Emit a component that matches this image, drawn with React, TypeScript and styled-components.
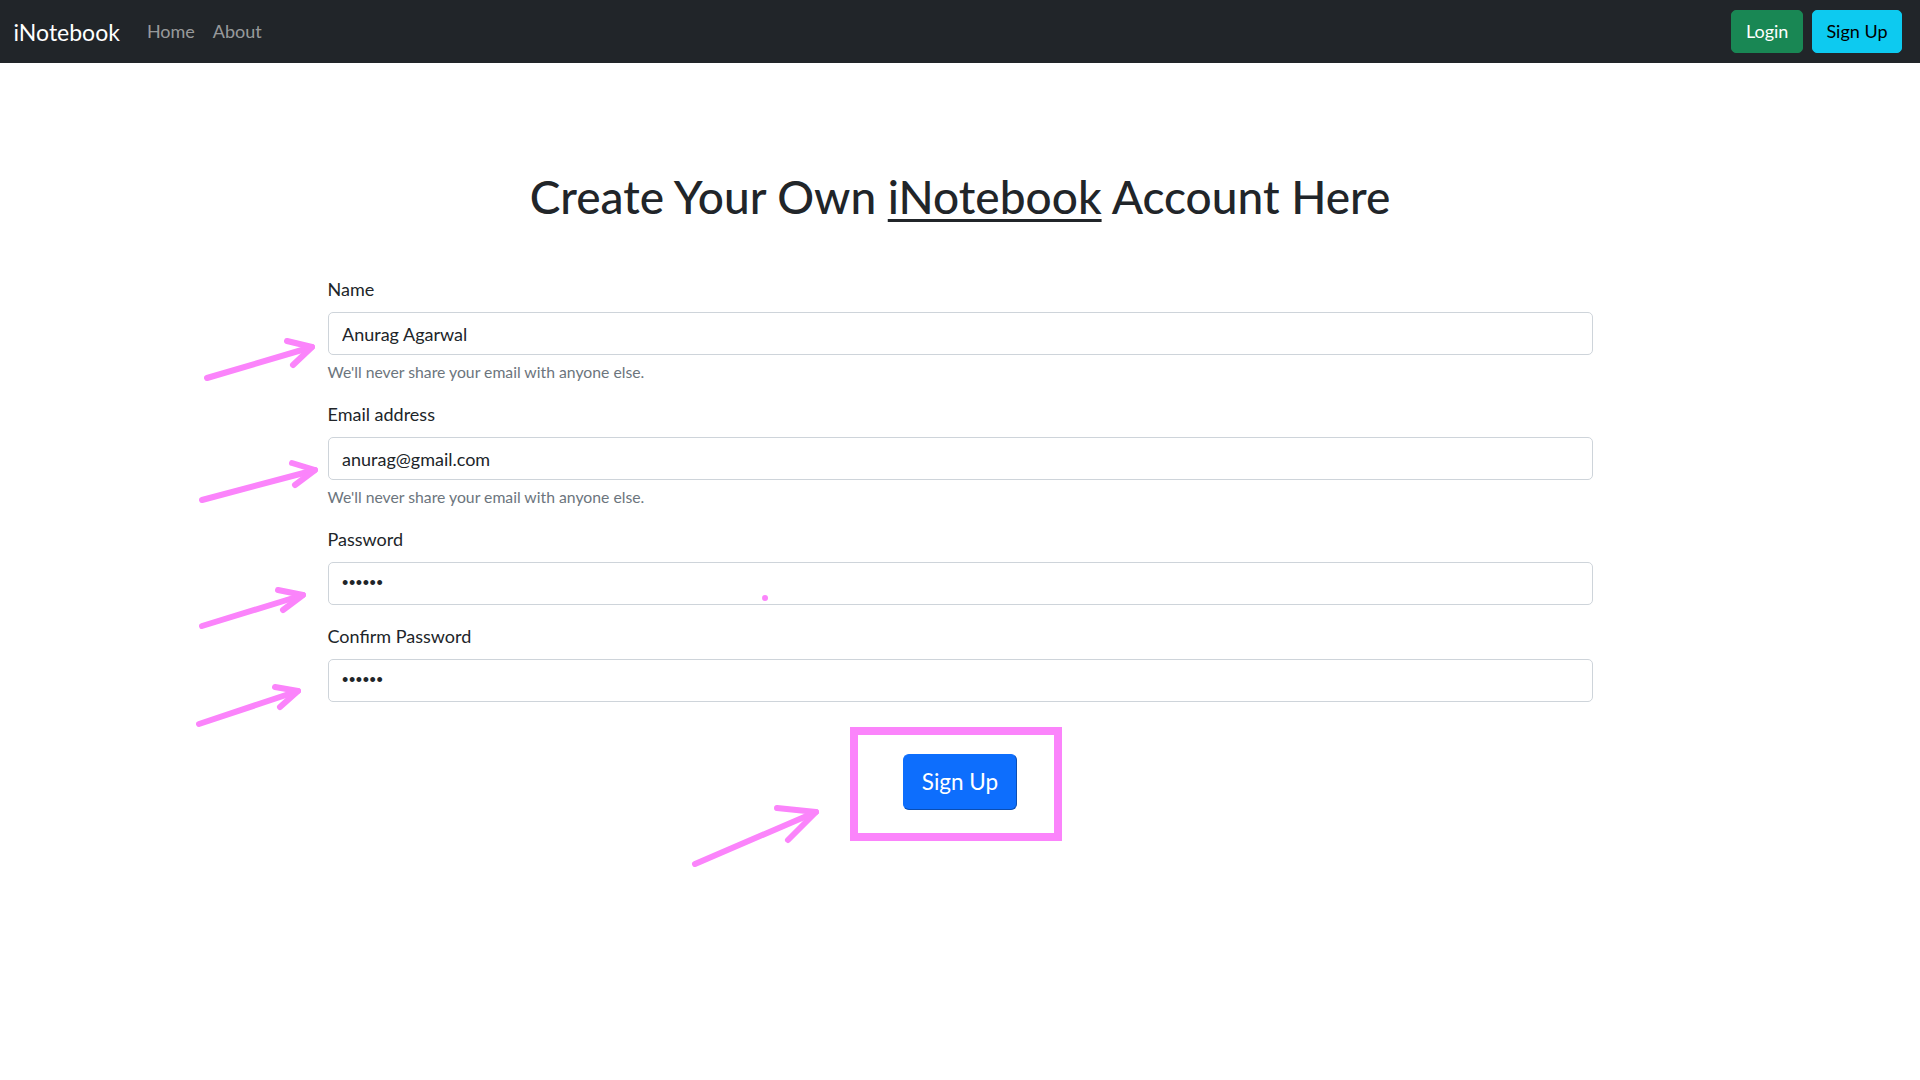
import React from "react";
import styled, { createGlobalStyle } from "styled-components";

const GlobalStyle = createGlobalStyle`
  html, body {
    margin: 0;
    padding: 0;
    background: #ffffff;
  }
  body {
    font-family: Lato, "Liberation Sans", Arial, sans-serif;
    color: #212529;
  }
  * { box-sizing: border-box; }
`;

const Page = styled.div`
  position: relative;
  min-height: 1080px;
  background: #ffffff;
`;

const Navbar = styled.nav`
  height: 63px;
  background: #212529;
  display: flex;
  align-items: center;
  justify-content: space-between;
  padding: 0 13.5px;
`;

const NavLeft = styled.div`
  display: flex;
  align-items: center;
`;

const Brand = styled.a`
  font-size: 23px;
  line-height: 34px;
  color: #ffffff;
  text-decoration: none;
  margin-right: 18px;
`;

const NavLink = styled.a`
  font-size: 18px;
  line-height: 27px;
  padding: 0 9px;
  color: rgba(255, 255, 255, 0.55);
  text-decoration: none;
`;

const NavRight = styled.div`
  display: flex;
  align-items: center;
`;

const NavButton = styled.button<{ $variant: "green" | "cyan" }>`
  font-family: inherit;
  font-size: 18px;
  line-height: 27px;
  padding: 7px 13.5px;
  margin: 0 4.5px;
  border-radius: 5px;
  border: 1px solid ${(p) => (p.$variant === "green" ? "#198754" : "#0dcaf0")};
  background: ${(p) => (p.$variant === "green" ? "#198754" : "#0dcaf0")};
  color: ${(p) => (p.$variant === "green" ? "#ffffff" : "#000000")};
`;

const Main = styled.main`
  padding-top: 107px;
`;

const Heading = styled.h1`
  margin: 0;
  font-size: 46px;
  line-height: 54px;
  font-weight: 500;
  text-align: center;
  color: #212529;
`;

const Underlined = styled.span`
  text-decoration: underline;
  text-decoration-thickness: 3px;
  text-underline-offset: 5px;
`;

const Form = styled.form`
  width: 1265px;
  margin: 52px auto 0;
`;

const Field = styled.div`
  margin-bottom: 18px;
`;

const Label = styled.label`
  display: block;
  font-size: 18px;
  line-height: 27px;
  margin-bottom: 9px;
`;

const Input = styled.input`
  display: block;
  width: 100%;
  height: 43px;
  padding: 6.75px 13.5px;
  font-family: inherit;
  font-size: 18px;
  line-height: 27px;
  color: #212529;
  background: #ffffff;
  border: 1px solid #ced4da;
  border-radius: 5px;
  outline: none;

  &[type="password"] {
    font-family: "Liberation Sans", Arial, sans-serif;
    letter-spacing: 0.6px;
  }
`;

const Help = styled.div`
  margin-top: 4.5px;
  font-size: 15.75px;
  line-height: 23.6px;
  color: #6c757d;
`;

const SubmitRow = styled.div`
  display: flex;
  justify-content: center;
  padding-top: 34px;
`;

const SubmitButton = styled.button`
  font-family: inherit;
  font-size: 22.5px;
  line-height: 34px;
  padding: 10px 18px;
  border-radius: 6px;
  border: 1px solid #0d6efd;
  border-right-color: #0a4eb4;
  border-bottom-color: #0a4eb4;
  background: #0d6efd;
  color: #ffffff;
`;

const Annotations = styled.svg`
  position: absolute;
  top: 0;
  left: 0;
  pointer-events: none;
`;

const arrows = [
  { shaft: "M207 378 L312 347", head: "M287 341 L312 347 L293 365" },
  { shaft: "M202 500 L315 470", head: "M292 463 L315 470 L295 485" },
  { shaft: "M202 626 L303 595", head: "M278 590 L303 595 L283 610" },
  { shaft: "M199 724 L298 691", head: "M275 687 L298 691 L280 707" },
  { shaft: "M695 864 L816 812", head: "M777 808 L816 812 L788 840" },
];

export default function App() {
  return (
    <Page>
      <GlobalStyle />
      <Navbar>
        <NavLeft>
          <Brand href="#">iNotebook</Brand>
          <NavLink href="#">Home</NavLink>
          <NavLink href="#">About</NavLink>
        </NavLeft>
        <NavRight>
          <NavButton $variant="green">Login</NavButton>
          <NavButton $variant="cyan">Sign Up</NavButton>
        </NavRight>
      </Navbar>
      <Main>
        <Heading>
          Create Your Own <Underlined>iNotebook</Underlined> Account Here
        </Heading>
        <Form onSubmit={(e) => e.preventDefault()}>
          <Field>
            <Label htmlFor="name">Name</Label>
            <Input id="name" type="text" defaultValue="Anurag Agarwal" />
            <Help>We'll never share your email with anyone else.</Help>
          </Field>
          <Field>
            <Label htmlFor="email">Email address</Label>
            <Input id="email" type="email" defaultValue="anurag@gmail.com" />
            <Help>We'll never share your email with anyone else.</Help>
          </Field>
          <Field>
            <Label htmlFor="password">Password</Label>
            <Input id="password" type="password" defaultValue="123456" />
          </Field>
          <Field>
            <Label htmlFor="cpassword">Confirm Password</Label>
            <Input id="cpassword" type="password" defaultValue="123456" />
          </Field>
          <SubmitRow>
            <SubmitButton type="submit">Sign Up</SubmitButton>
          </SubmitRow>
        </Form>
      </Main>
      <Annotations width="1920" height="1080" viewBox="0 0 1920 1080">
        <g
          fill="none"
          stroke="#fb84fb"
          strokeWidth="6"
          strokeLinecap="round"
          strokeLinejoin="round"
        >
          {arrows.map((a, i) => (
            <g key={i}>
              <path d={a.shaft} />
              <path d={a.head} />
            </g>
          ))}
          <rect x="854" y="731" width="204" height="106" strokeWidth="8" strokeLinecap="butt" strokeLinejoin="miter" />
        </g>
        <circle cx="765" cy="598" r="3" fill="#fb84fb" />
      </Annotations>
    </Page>
  );
}
